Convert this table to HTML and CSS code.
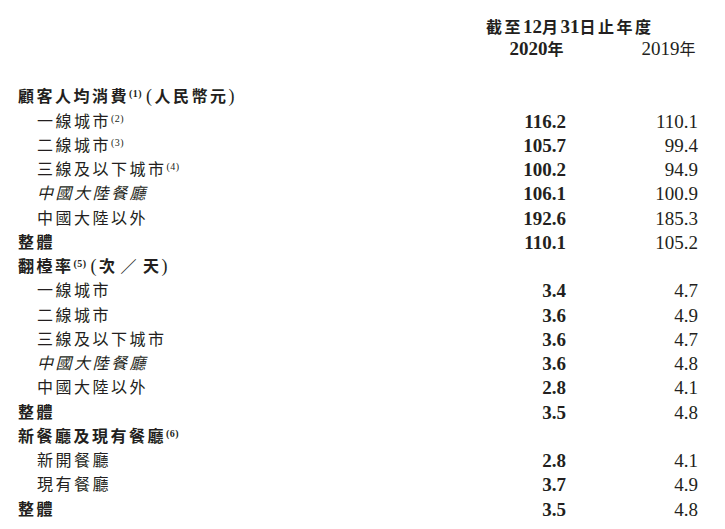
FILE: index.html
```html
<!DOCTYPE html>
<html lang="zh-Hant">
<head>
<meta charset="utf-8">
<title>顧客人均消費及翻檯率</title>
<link rel="stylesheet" href="styles.css">
</head>
<body>
<div class="sheet">
  <div class="head">
    <div class="period b">截至<span class="n">12</span>月<span class="n">31</span>日止年度</div>
    <div class="yr b"><span class="n">2020</span>年</div>
    <div class="yr"><span class="n">2019</span>年</div>
  </div>
  <div class="grid">
    <div class="lab b">顧客人均消費<sup class="fn b">(1)</sup><span class="pr">(</span>人民幣元<span class="pr">)</span></div><div class="v"></div><div class="v"></div>
    <div class="lab sub">一線城市<sup class="fn">(2)</sup></div><div class="v b">116.2</div><div class="v">110.1</div>
    <div class="lab sub">二線城市<sup class="fn">(3)</sup></div><div class="v b">105.7</div><div class="v">99.4</div>
    <div class="lab sub">三線及以下城市<sup class="fn">(4)</sup></div><div class="v b">100.2</div><div class="v">94.9</div>
    <div class="lab sub it">中國大陸餐廳</div><div class="v b">106.1</div><div class="v">100.9</div>
    <div class="lab sub">中國大陸以外</div><div class="v b">192.6</div><div class="v">185.3</div>
    <div class="lab b">整體</div><div class="v b">110.1</div><div class="v">105.2</div>

    <div class="lab b">翻檯率<sup class="fn b">(5)</sup><span class="pr">(</span>次<span class="sl">／</span>天<span class="pr">)</span></div><div class="v"></div><div class="v"></div>
    <div class="lab sub">一線城市</div><div class="v b">3.4</div><div class="v">4.7</div>
    <div class="lab sub">二線城市</div><div class="v b">3.6</div><div class="v">4.9</div>
    <div class="lab sub">三線及以下城市</div><div class="v b">3.6</div><div class="v">4.7</div>
    <div class="lab sub it">中國大陸餐廳</div><div class="v b">3.6</div><div class="v">4.8</div>
    <div class="lab sub">中國大陸以外</div><div class="v b">2.8</div><div class="v">4.1</div>
    <div class="lab b">整體</div><div class="v b">3.5</div><div class="v">4.8</div>

    <div class="lab b">新餐廳及現有餐廳<sup class="fn b">(6)</sup></div><div class="v"></div><div class="v"></div>
    <div class="lab sub">新開餐廳</div><div class="v b">2.8</div><div class="v">4.1</div>
    <div class="lab sub">現有餐廳</div><div class="v b">3.7</div><div class="v">4.9</div>
    <div class="lab b">整體</div><div class="v b">3.5</div><div class="v">4.8</div>
  </div>
</div>
</body>
</html>
```
FILE: styles.css
```css
html, body {
  margin: 0;
  padding: 0;
  background: #ffffff;
}

body {
  font-family: "Liberation Serif", "Noto Sans CJK TC", serif;
  font-size: 16px;
  color: #231f20;
}

.sheet {
  width: 680px;
  padding: 15.75px 0 0 18px;
}

.head {
  display: grid;
  grid-template-columns: 1fr 80px 132px;
  grid-auto-rows: 22.5px;
  line-height: 22.5px;
  margin-bottom: 24.6px;
  letter-spacing: 2.5px;
}

.period {
  grid-column: 2 / 4;
  grid-row: 1;
  white-space: nowrap;
}

.yr {
  grid-row: 2;
  text-align: right;
}

.head .yr:nth-child(2) {
  grid-column: 2;
}

.head .yr:nth-child(3) {
  grid-column: 3;
}

.n {
  font-size: 19px;
  letter-spacing: 0;
}

.grid {
  display: grid;
  grid-template-columns: 1fr 80px 132px;
  grid-auto-rows: 24.25px;
  line-height: 24.25px;
}

.lab {
  letter-spacing: 2.5px;
  white-space: nowrap;
}

.sub {
  padding-left: 19px;
}

.it {
  font-style: italic;
}

.b {
  font-weight: 700;
}

.v {
  text-align: right;
  font-size: 19px;
}

.fn {
  font-size: 10px;
  line-height: 0;
  vertical-align: 5px;
  letter-spacing: 0.4px;
  margin-right: 1px;
}

.fn.b {
  margin-right: 4px;
}

.pr {
  font-size: 18px;
  font-weight: 400;
  line-height: 0;
}

.sl {
  margin: 0 4px 0 3px;
}
```
